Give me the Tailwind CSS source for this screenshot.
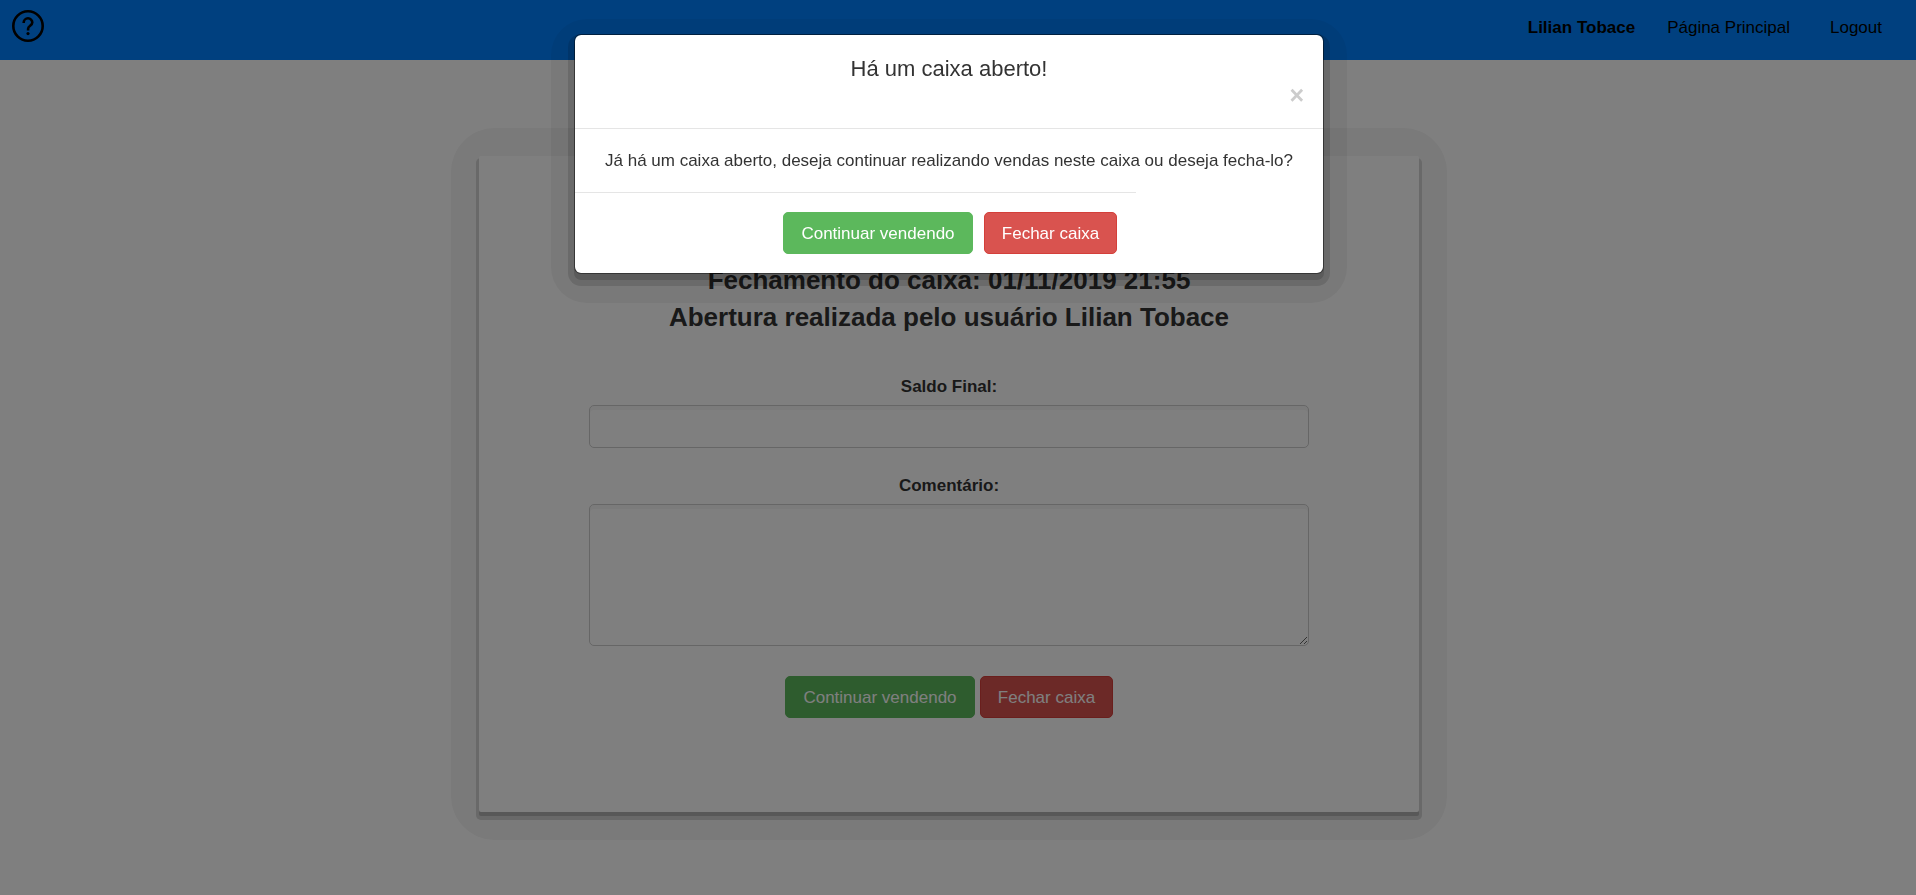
<!DOCTYPE html>
<html lang="pt-BR">
<head>
<meta charset="utf-8">
<meta name="viewport" content="width=device-width, initial-scale=1">
<title>Fechamento do caixa</title>
<script src="https://cdn.jsdelivr.net/npm/@tailwindcss/browser@4"></script>
</head>
<body class="min-h-screen bg-white font-['Liberation_Sans',Arial,sans-serif] text-[17px] leading-[25px] text-[#333]">

<header class="flex h-15 items-start justify-between bg-[#0080ff] pr-[34px] pl-3 text-black">
  <a href="#ajuda" aria-label="Ajuda" class="mt-[10px] block">
    <svg class="size-8" viewBox="0 0 32 32" fill="none" stroke="#000" stroke-width="2.6">
      <circle cx="16" cy="16" r="14.7"/>
      <path d="M11.700 13V12.600a4.300 4.300 0 0 1 8.600 0c0 3-4.200 3.400-4.200 6.200v1.700"/>
      <circle cx="16" cy="23.600" r="1.600" fill="#000" stroke="none"/>
    </svg>
  </a>
  <nav class="flex pt-[15px]">
    <span class="mr-8 font-bold">Lilian Tobace</span>
    <a href="#principal" class="mr-10">Página Principal</a>
    <a href="#logout">Logout</a>
  </nav>
</header>

<main class="pt-[68px] pr-[18px]">
  <!-- soft outer band around the card -->
  <div class="mx-auto max-w-[996px] rounded-[44px] bg-[#f4f4f4] p-7">
    <section class="rounded-[2px] bg-white px-[110px] pt-[106px] pb-[94px] text-center shadow-[0_4px_0_0_#b0b0b0,0_5px_0_3px_#d2d2d2]">
      <h1 class="text-[26px] leading-[37px] font-bold">Fechamento do caixa: 01/11/2019 21:55<br>Abertura realizada pelo usuário Lilian Tobace</h1>
      <form class="mt-[38px]">
        <label for="saldo" class="mb-1.5 block font-bold">Saldo Final:</label>
        <input id="saldo" type="text" class="block h-[43px] w-full rounded-[5px] border border-[#ccc] px-4 shadow-[inset_0_4px_0_#f7f7f7]">
        <label for="comentario" class="mt-[25px] mb-1.5 block font-bold">Comentário:</label>
        <textarea id="comentario" class="block h-[142px] w-full resize-y rounded-[5px] border border-[#ccc] px-4 py-2 shadow-[inset_0_4px_0_#f7f7f7]"></textarea>
        <div class="mt-[30px] flex justify-center gap-[5px]">
          <button type="button" class="h-[42px] w-[190px] rounded-[5px] border border-[#5cb85c] bg-[#5cb85c] text-white">Continuar vendendo</button>
          <button type="button" class="h-[42px] w-[133px] rounded-[5px] border border-[#d43f3a] bg-[#d9534f] text-white">Fechar caixa</button>
        </div>
      </form>
    </section>
  </div>
</main>

<div class="fixed inset-0 bg-black/50 pt-[34px] pr-[18px]">
  <div class="relative isolate mx-auto max-w-[750px] before:absolute before:-inset-x-[23px] before:-top-[15px] before:-bottom-[29px] before:-z-10 before:rounded-[36px] before:bg-black/5">
    <div role="dialog" aria-modal="true" aria-labelledby="titulo" class="rounded-[7px] border border-black/40 bg-white bg-clip-padding shadow-[0_6px_0_0_rgb(0_0_0/0.15),0_6px_0_6px_rgb(0_0_0/0.13)]">
      <div class="border-b border-[#e5e5e5] px-[19px] pt-[18px] pb-[21px]">
        <h2 id="titulo" class="text-center text-[22px] leading-[31px]">Há um caixa aberto!</h2>
        <button type="button" aria-label="Fechar" class="ml-auto block h-[23px] text-[25px] leading-[23px] font-bold text-[#ccc]">×</button>
      </div>
      <p class="px-[19px] py-[19px] text-center">Já há um caixa aberto, deseja continuar realizando vendas neste caixa ou deseja fecha-lo?</p>
      <div class="flex w-3/4 justify-end gap-[11px] border-t border-[#e5e5e5] px-[19px] pt-[19px] pb-[19px]">
        <button type="button" class="h-[42px] w-[190px] rounded-[5px] border border-[#5cb85c] bg-[#5cb85c] text-white">Continuar vendendo</button>
        <button type="button" class="h-[42px] w-[133px] rounded-[5px] border border-[#d43f3a] bg-[#d9534f] text-white">Fechar caixa</button>
      </div>
    </div>
  </div>
</div>

</body>
</html>
